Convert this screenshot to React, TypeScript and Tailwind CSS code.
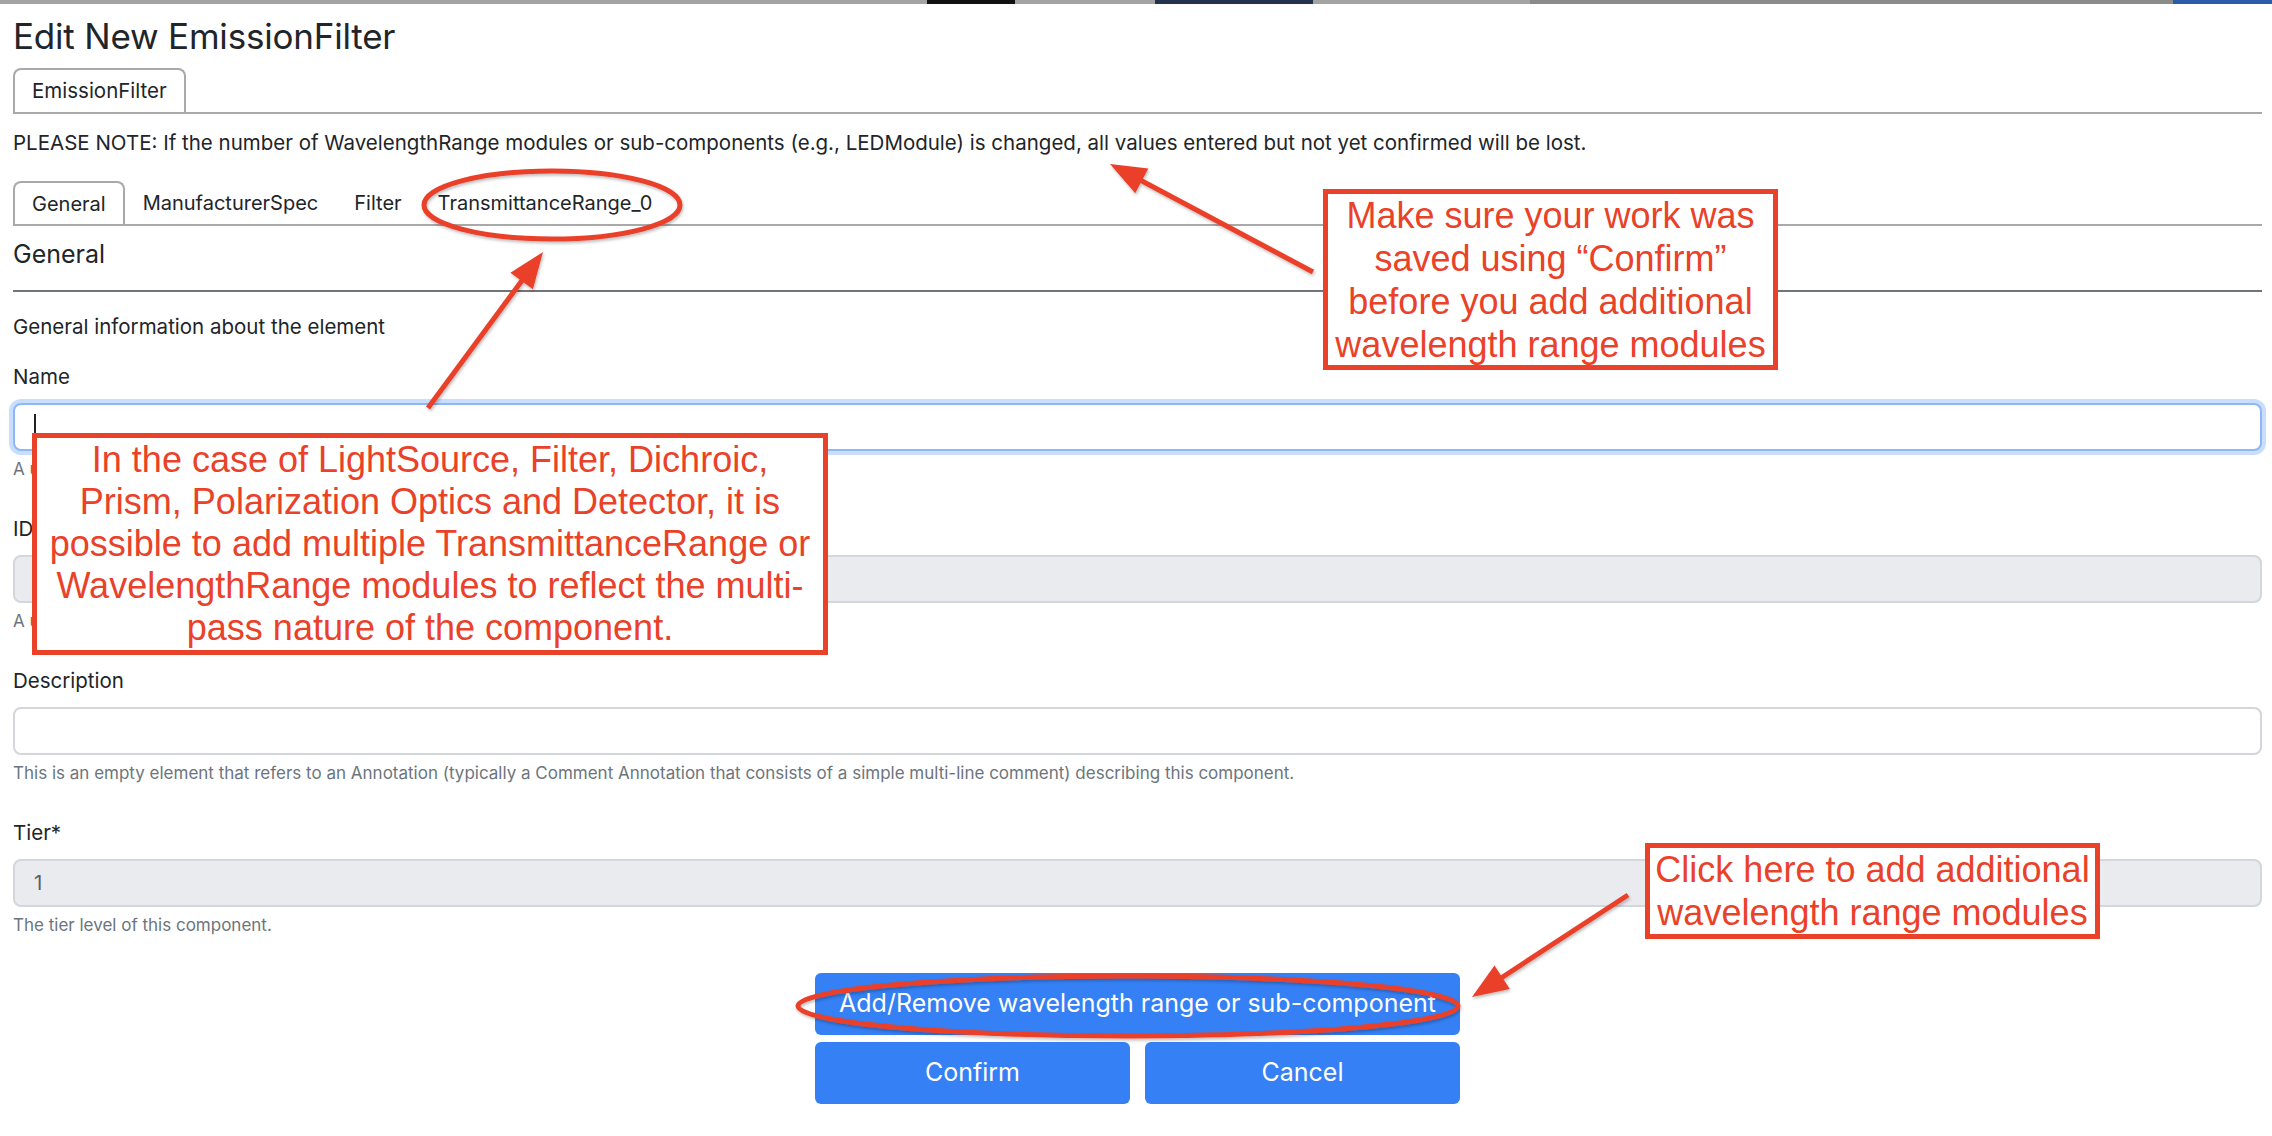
import React from "react";

const RED = "#ea4129";

type Pt = [number, number];

function Arrow({ from, to }: { from: Pt; to: Pt }) {
  const dx = to[0] - from[0];
  const dy = to[1] - from[1];
  const len = Math.hypot(dx, dy);
  const ux = dx / len;
  const uy = dy / len;
  const head = 36;
  const half = 14;
  const bx = to[0] - ux * head;
  const by = to[1] - uy * head;
  const nx = -uy * half;
  const ny = ux * half;
  return (
    <g filter="url(#shadow)">
      <line x1={from[0]} y1={from[1]} x2={bx + ux * 4} y2={by + uy * 4} stroke={RED} strokeWidth={5} />
      <polygon points={`${to[0]},${to[1]} ${bx + nx},${by + ny} ${bx - nx},${by - ny}`} fill={RED} />
    </g>
  );
}

function Field({
  label,
  value,
  help,
  disabled,
  focused,
}: {
  label: string;
  value?: string;
  help: string;
  disabled?: boolean;
  focused?: boolean;
}) {
  return (
    <div className="mb-[38px]">
      <div className="text-[20.5px] leading-[24px] mb-[14px] text-[#212529]">{label}</div>
      <div
        className={
          focused
            ? "h-[48px] rounded-[8px] border-2 border-[#8db7f7] ring-4 ring-[#c9defc] bg-white flex items-center pl-[19px]"
            : disabled
            ? "h-[48px] rounded-[8px] border-2 border-[#d3d6da] bg-[#e9ebef] flex items-center pl-[19px]"
            : "h-[48px] rounded-[8px] border-2 border-[#d3d6da] bg-white flex items-center pl-[19px]"
        }
      >
        {focused && <span className="w-[2px] h-[26px] bg-[#222]" />}
        {value && <span className="text-[20.5px] text-[#5b6168]">{value}</span>}
      </div>
      <div className="mt-[8px] text-[17px] leading-[20px] text-[#6c757d]">{help}</div>
    </div>
  );
}

export default function App() {
  return (
    <div
      className="relative w-[2272px] h-[1136px] overflow-hidden bg-white text-[#212529]"
      style={{ fontFamily: "Inter, 'Noto Sans', sans-serif" }}
    >
      {/* desktop strip behind the modal */}
      <div className="flex h-[4px]">
        <div className="w-[927px] bg-[#a3a3a3]" />
        <div className="w-[88px] bg-[#111]" />
        <div className="w-[140px] bg-[#a3a3a3]" />
        <div className="w-[158px] bg-[#23324f]" />
        <div className="w-[217px] bg-[#a3a3a3]" />
        <div className="w-[643px] bg-[#8a8a8a]" />
        <div className="flex-1 bg-[#2a5ca8]" />
      </div>

      <div className="pl-[13px] pr-[10px]">
        <h1 className="mt-[14px] text-[35px] leading-[36px] font-normal tracking-[-0.2px]">Edit New EmissionFilter</h1>

        {/* top tabs */}
        <div className="mt-[14px] flex border-b-2 border-[#a9a9a9]">
          <div className="h-[44px] px-[17px] flex items-center border-2 border-b-0 border-[#a9a9a9] rounded-t-[8px] text-[20.5px]">
            EmissionFilter
          </div>
        </div>

        <p className="mt-[17px] text-[20.5px] leading-[24px]">
          PLEASE NOTE: If the number of WavelengthRange modules or sub-components (e.g., LEDModule) is changed, all
          values entered but not yet confirmed will be lost.
        </p>

        {/* section tabs */}
        <div className="mt-[26px] flex border-b-2 border-[#a9a9a9] text-[20px]">
          <div className="h-[43px] px-[17px] flex items-center border-2 border-b-0 border-[#a9a9a9] rounded-t-[8px]">
            General
          </div>
          <div className="h-[43px] px-[18px] flex items-center">ManufacturerSpec</div>
          <div className="h-[43px] px-[18px] flex items-center">Filter</div>
          <div className="h-[43px] px-[18px] flex items-center">TransmittanceRange_0</div>
        </div>

        <h5 className="mt-[13px] pb-[21px] border-b-2 border-[#70757c] text-[25px] leading-[30px] font-normal">
          General
        </h5>

        <p className="mt-[23px] mb-[26px] text-[20.5px] leading-[24px]">General information about the element</p>

        <Field label="Name" help="A user-defined name for this component." focused />
        <Field label="ID" help="A unique identifier for this component." disabled />
        <Field label="Description" help="This is an empty element that refers to an Annotation (typically a Comment Annotation that consists of a simple multi-line comment) describing this component." />
        <Field label="Tier*" value="1" help="The tier level of this component." disabled />

        <div className="mt-[4px] mx-auto w-[645px] flex flex-col gap-[7px]">
          <button className="h-[62px] rounded-[6px] bg-[#3480f4] text-white text-[25px]">
            Add/Remove wavelength range or sub-component
          </button>
          <div className="grid grid-cols-2 gap-[15px]">
            <button className="h-[62px] rounded-[6px] bg-[#3480f4] text-white text-[25px]">Confirm</button>
            <button className="h-[62px] rounded-[6px] bg-[#3480f4] text-white text-[25px]">Cancel</button>
          </div>
        </div>
      </div>

      {/* annotations */}
      <svg className="absolute inset-0 pointer-events-none" width={2272} height={1136} viewBox="0 0 2272 1136">
        <defs>
          <filter id="shadow" x="-20%" y="-20%" width="140%" height="140%">
            <feDropShadow dx="1" dy="2" stdDeviation="1.5" floodColor="#000" floodOpacity="0.25" />
          </filter>
        </defs>
        <ellipse cx={552} cy={205} rx={128} ry={34} fill="none" stroke={RED} strokeWidth={5} filter="url(#shadow)" />
        <ellipse cx={1128} cy={1006} rx={330} ry={30} fill="none" stroke={RED} strokeWidth={5} filter="url(#shadow)" />
        <Arrow from={[1313, 272]} to={[1110, 164]} />
        <Arrow from={[428, 408]} to={[543, 252]} />
        <Arrow from={[1628, 895]} to={[1472, 997]} />
      </svg>

      <div
        className="absolute left-[1323px] top-[189px] w-[455px] h-[181px] border-[5px] border-[#ea4129] bg-white flex items-center justify-center text-center text-[36px] leading-[43px] text-[#ea4129] whitespace-nowrap"
        style={{ fontFamily: "'Liberation Sans', Arial, sans-serif" }}
      >
        <div>
          Make sure your work was
          <br />
          saved using “Confirm”
          <br />
          before you add additional
          <br />
          wavelength range modules
        </div>
      </div>

      <div
        className="absolute left-[32px] top-[433px] w-[796px] h-[222px] border-[5px] border-[#ea4129] bg-white flex items-center justify-center text-center text-[36px] leading-[42px] text-[#ea4129] whitespace-nowrap"
        style={{ fontFamily: "'Liberation Sans', Arial, sans-serif" }}
      >
        <div>
          In the case of LightSource, Filter, Dichroic,
          <br />
          Prism, Polarization Optics and Detector, it is
          <br />
          possible to add multiple TransmittanceRange or
          <br />
          WavelengthRange modules to reflect the multi-
          <br />
          pass nature of the component.
        </div>
      </div>

      <div
        className="absolute left-[1645px] top-[843px] w-[455px] h-[96px] border-[5px] border-[#ea4129] bg-white flex items-center justify-center text-center text-[36px] leading-[43px] text-[#ea4129] whitespace-nowrap"
        style={{ fontFamily: "'Liberation Sans', Arial, sans-serif" }}
      >
        <div>
          Click here to add additional
          <br />
          wavelength range modules
        </div>
      </div>
    </div>
  );
}
